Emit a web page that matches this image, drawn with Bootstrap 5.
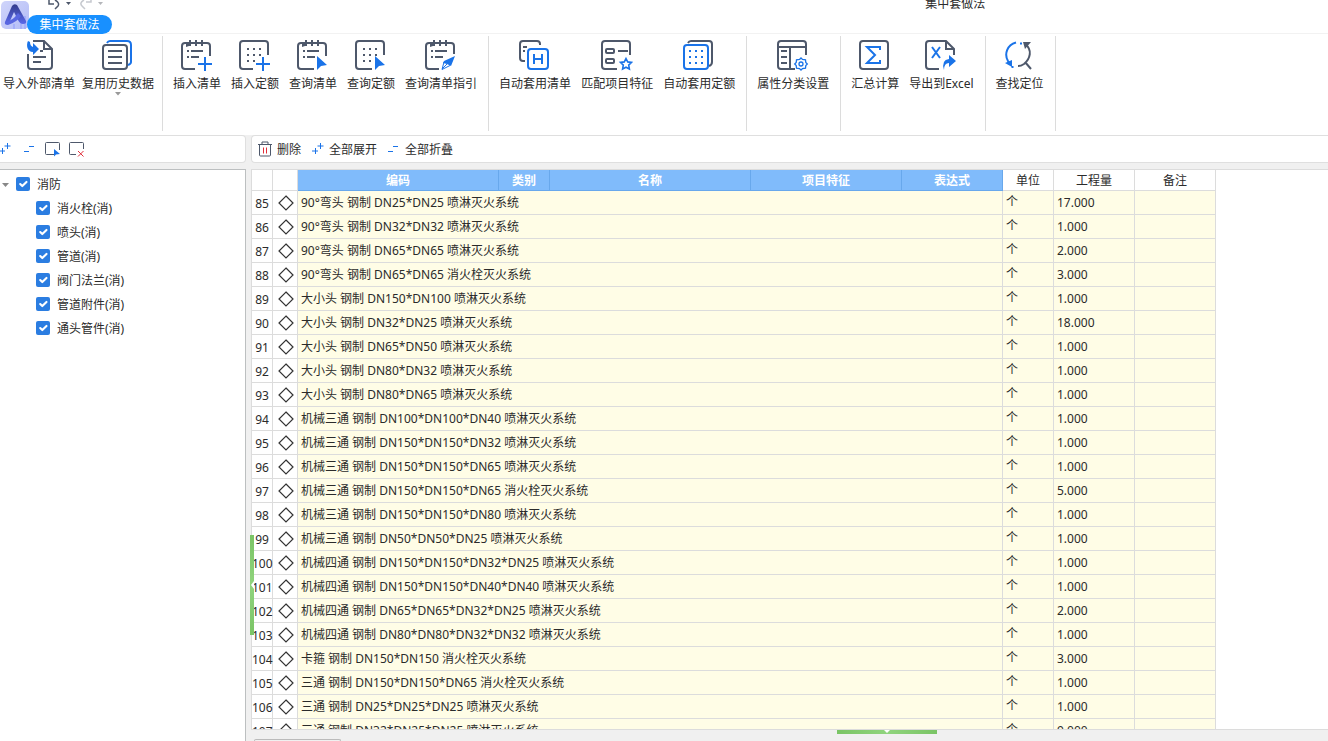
<!DOCTYPE html>
<html lang="zh-CN">
<head>
<meta charset="utf-8">
<meta name="viewport" content="width=device-width, initial-scale=1">
<title>集中套做法</title>
<link href="https://cdn.jsdelivr.net/npm/bootstrap@5.3.0/dist/css/bootstrap.min.css" rel="stylesheet">
<style>
body{font:12px/16px "Noto Sans","Noto Sans CJK SC",sans-serif;color:#2b2b2b;background:#f0f0f0}
.logo{width:30px;height:30px}
.brand-row{height:34px;border-bottom:1px solid #f2f2f2}
.quick{height:15px;flex:none}
.quick-history{padding-left:18px}
.quick-title{line-height:8px}
.grow-l{flex:834 1 0}
.grow-r{flex:348 1 0}
.tab-pill{height:19px;flex:none;width:85px;line-height:18px;margin-left:-3px;background:#1890ff;color:#fff;border-radius:10px;font-size:12px;padding:1px 0 0;border:0}
.ribbon{padding:2px 0 4px;height:101px}
.tool-group{display:flex;gap:10px;padding:0 11px 0 10px;border-right:1px solid #dcdcdc;height:95px}
.tool-group.first{gap:7px;padding:0 8px 0 3px}
.tool{border:0;background:none;padding:3px 0 0;display:flex;flex-direction:column;align-items:center;color:inherit;white-space:nowrap;flex:none}
.tool span{line-height:16px;margin-top:5px}
.tool svg,.bar svg,.ico{fill:none;stroke:#4e586b;stroke-width:2}
svg .b{stroke:#1a73e8}
svg .f{fill:#1a73e8;stroke:none}
svg .g{fill:#4e586b;stroke:none}
svg .d{stroke-dasharray:2 4}
svg .t{stroke-width:1}
svg .r{stroke:#e02f3a}
.bar{height:28px;background:#fff;border:1px solid #dfdfdf;padding-top:2px}
.bar button{border:0;background:none;padding:0;color:inherit;display:flex;align-items:center}
.bar svg{margin-bottom:2px}
.side{width:246px}
.side .bar{border-left:0;border-radius:0 4px 4px 0;gap:8px;padding-left:0}
.bar-main{border-right:0!important;border-radius:4px 0 0 4px;gap:10px;padding-left:5px}
.bar-main button{gap:4px}
.panes{gap:5px}
.tree{background:#fff;border:solid #bcbfc0;border-width:1px 1px 0 0;padding-top:3px;margin-top:6px}
.tree label,.tree .root{height:24px;display:flex;align-items:center}
.tree .kid{padding-left:36px}
.tree .form-check-input{width:14px;height:14px;margin:0 7px 2px 0;border-radius:2px;border:0;float:none;background-size:14px}
.tree .form-check-input:checked{background-color:#2b7de1}
.caret{width:16px;height:14px}
.sheet{background:#fff;border:solid #dcdcdc;border-width:1px 0 1px 1px;margin-top:6px}
.grid{table-layout:fixed;width:964px;border-collapse:separate;border-spacing:0}
.grid th,.grid td{height:24px;padding:0 3px;line-height:16px;border:solid #dcdcdc;border-width:0 1px 1px 0;white-space:nowrap}
.grid th{height:21px;font-weight:400;text-align:center;padding:2px 0 0}
.grid th.hot{background:#80bbfb;color:#fff;font-weight:700;border-color:#68a8ec}
.grid td{background:#fffde6}
.grid .no,.grid .mk{background:#fff;text-align:center}
.grid .no{padding:2px 0 0}
.grid .mk{padding:0 0 0 1px}
.grid .unit{padding-bottom:2px}
.grid svg{display:block;margin:auto;fill:none;stroke:#333;stroke-width:1.2}
.foot{height:11px}
.foot-tab{width:87px;height:2px;margin-left:3px;border:1px solid #bbb;border-bottom:0;border-radius:3px 3px 0 0}
.grip{background:#7cc568;position:absolute}
.grip-v{width:4px;height:100px;left:-1px;top:66%;background:linear-gradient(#7ac465,#90d47e,#7ac465)}
.grip-h{height:4px;width:100px;left:54.4%;top:0;background:linear-gradient(90deg,#7ac465,#90d47e,#7ac465)}
.grip svg{position:absolute;display:block}
</style>
</head>
<body class="vh-100 overflow-hidden d-flex flex-column">

<header class="bg-white flex-shrink-0">
  <div class="brand-row d-flex">
    <svg class="logo flex-shrink-0" viewBox="0 0 30 30">
      <defs>
        <linearGradient id="lg" x2="1" y2="1"><stop stop-color="#d0d5fa"/><stop offset="1" stop-color="#b3bcf7"/></linearGradient>
        <linearGradient id="la" x2="0" y2="1"><stop stop-color="#333c8c"/><stop offset="1" stop-color="#5a68ea"/></linearGradient>
      </defs>
      <rect x="1" y="1" width="28" height="28" rx="5" fill="url(#lg)"/>
      <path d="M20 29v-7h2v7zM24 29V16h2v13zM13 29v-5h2v5z" fill="#a5affa"/>
      <path d="M5 22 12 6q2-3 5-1l9 16q1 3-3 3-3 0-5-4l-4-8-4 9q-2 4-5 1z" fill="url(#la)"/>
      <path d="M5 22q8-1 13-9l3 3q-4 6-13 9-4 0-3-3z" fill="#5866e0"/>
    </svg>
    <div class="flex-grow-1 d-flex flex-column">
      <div class="quick d-flex">
        <div class="quick-history d-flex">
          <svg class="ico" width="56" height="12" viewBox="48 0 56 12">
            <path d="M49 0v4h5M55 0q5 3 3 6l-3 3" style="stroke-width:1.5"/><path class="g" d="M66 2h5l-2.500 3z"/>
            <path d="M91 0v2h-5M84 0q-5 3-2 6l3 3" style="stroke:#c6c9cf;stroke-width:1.5"/><path d="M98 2h5l-2.500 3z" style="fill:#b4b6ba;stroke:none"/>
          </svg>
        </div>
        <div class="grow-l"></div>
        <div class="quick-title text-nowrap">集中套做法</div>
        <div class="grow-r"></div>
      </div>
      <button class="tab-pill position-relative" type="button">集中套做法</button>
    </div>
  </div>

  <nav class="ribbon d-flex" aria-label="工具栏">
    <div class="tool-group first">
      <button class="tool" type="button"><svg width="32" height="32"><path d="M10 2h11l8 8v17a3 3 0 0 1-3 3H8a3 3 0 0 1-3-3V15M21 2v8h8M17 12h3M10 18h13M10 23h8"/><path class="f" d="M5 2C3 6 4 13 10 13v3l6-6-6-6v4Q7 7 7 3z"/></svg><span>导入外部清单</span></button>
      <button class="tool" type="button"><svg width="32" height="32"><rect x="1" y="6" width="24" height="24" rx="3"/><path d="M6 12h14M6 18h14M6 24h14"/><path class="b" d="M5 4q1-2 3-2h17q4 0 4 4v17q0 2-3 3"/></svg><span>复用历史数据</span><svg width="6" height="4"><path d="M0 0h6L3 3.500z" style="fill:#999;stroke:none"/></svg></button>
    </div>
    <div class="tool-group">
      <button class="tool" type="button"><svg width="32" height="32"><path d="M14 30H4a3 3 0 0 1-3-3V7a3 3 0 0 1 3-3h22a3 3 0 0 1 3 3v10M9 1v6M15 1v6M21 1v6M6 12h2M10 12h12M6 18h2M10 18h8"/><path class="g" d="M5 4h5v3H8L5 8z"/><path class="b" d="M24 18v14M17 25h14"/></svg><span>插入清单</span></button>
      <button class="tool" type="button"><svg width="32" height="32"><path d="M14 30H4a3 3 0 0 1-3-3V5a3 3 0 0 1 3-3h22a3 3 0 0 1 3 3v11"/><path class="d" d="M8 10h14M8 16h14M8 22h8"/><path class="b" d="M24 18v14M17 25h14"/></svg><span>插入定额</span></button>
      <button class="tool" type="button"><svg width="32" height="32"><path d="M17 30H4a3 3 0 0 1-3-3V7a3 3 0 0 1 3-3h22a3 3 0 0 1 3 3v10M9 1v6M15 1v6M21 1v6M6 12h2M10 12h12M6 18h2M10 18h8"/><path class="g" d="M5 4h5v3H8L5 8z"/><path class="f" d="M20 17l10 9-6 1-4 4z"/></svg><span>查询清单</span></button>
      <button class="tool" type="button"><svg width="32" height="32"><path d="M17 30H4a3 3 0 0 1-3-3V5a3 3 0 0 1 3-3h22a3 3 0 0 1 3 3v11"/><path class="d" d="M8 10h14M8 16h14M8 22h8"/><path class="f" d="M20 17l10 9-6 1-4 4z"/></svg><span>查询定额</span></button>
      <button class="tool" type="button"><svg width="32" height="32"><path d="M14 30H4a3 3 0 0 1-3-3V7a3 3 0 0 1 3-3h22a3 3 0 0 1 3 3v8M9 1v6M15 1v6M21 1v6M6 12h2M10 12h12M6 18h2M10 18h8"/><path class="g" d="M5 4h5v3H8L5 8z"/><path class="f" d="M30 17 19 22l-1 2 4 1 4 2z"/><path class="b t" d="M19 23l-2 7.500 8-4M17 30l5-5"/></svg><span>查询清单指引</span></button>
    </div>
    <div class="tool-group">
      <button class="tool" type="button"><svg width="32" height="32"><path d="M6 22H4a3 3 0 0 1-3-3V5a3 3 0 0 1 3-3h14a3 3 0 0 1 3 3v1M4 8h4M4 12h2"/><rect class="b" x="9" y="10" width="20" height="20" rx="3"/><path class="b" d="M15 15v10M23 15v10M15 20h8"/></svg><span>自动套用清单</span></button>
      <button class="tool" type="button"><svg width="32" height="32"><path d="M16 30H4a3 3 0 0 1-3-3V5a3 3 0 0 1 3-3h22a3 3 0 0 1 3 3v11M17 12h10"/><rect x="5" y="10" width="8" height="4" rx="1"/><rect x="5" y="20" width="8" height="4" rx="1"/><path class="b" style="stroke-width:1.600" d="M25 19.500l1.700 3.400 3.800.5-2.800 2.700.7 3.900-3.400-1.800-3.400 1.800.7-3.900-2.800-2.700 3.800-.5z"/></svg><span>匹配项目特征</span></button>
      <button class="tool" type="button"><svg width="32" height="32"><path d="M5 4q1-2 3-2h18q3 0 3 3v18q0 3-3 4"/><rect class="b" x="1" y="6" width="24" height="24" rx="3"/><path class="b d" d="M6 12h14M6 18h14M6 24h14"/></svg><span>自动套用定额</span></button>
    </div>
    <div class="tool-group">
      <button class="tool" type="button"><svg width="32" height="32"><path d="M18 30H4a3 3 0 0 1-3-3V5a3 3 0 0 1 3-3h22a3 3 0 0 1 3 3v11M1 8h28M13 8v22M4 12h6M4 18h6M4 24h6"/><path class="b" style="stroke-width:1.300" d="M22.500 20.500l1.500-1.500 1.500 1.500 3 .3.300 2.700 1.500 1.500-1.500 1.500-.3 2.700-3 .3L24 31l-1.500-1.500-3-.3-.3-2.700L17.700 25l1.500-1.500.3-2.700z"/><circle class="b" style="stroke-width:1.300" cx="24" cy="25" r="2"/></svg><span>属性分类设置</span></button>
    </div>
    <div class="tool-group">
      <button class="tool" type="button"><svg width="32" height="32"><rect x="1" y="2" width="28" height="28" rx="3"/><path class="b" d="M21 11V8H8l8 8-8 8h13v-3"/></svg><span>汇总计算</span></button>
      <button class="tool" type="button"><svg width="32" height="32"><path d="M14 30H4a3 3 0 0 1-3-3V5a3 3 0 0 1 3-3h17l8 8v6M21 2v8h8"/><path class="b" d="M7 8l8 11M15 8L7 19"/><path class="f" d="M19 31q-3-10 5-11v-4l7 6-7 6v-4q-5 0-5 7z"/></svg><span>导出到Excel</span></button>
    </div>
    <div class="tool-group">
      <button class="tool" type="button"><svg width="32" height="32"><path class="b" d="M12 3.500C3 6 0 15 4 22l2 3M17 3.500v2M7.500 28h2"/><path class="f" d="M1 24l7-3v7z"/><path d="M21 5c8 6 5 15-1 20q-3 2-6 2M21 23l6 7"/><path class="g" d="M19 3h8l-6 7z"/></svg><span>查找定位</span></button>
    </div>
  </nav>
</header>

<main class="panes d-flex flex-grow-1 overflow-hidden">
  <aside class="side d-flex flex-column flex-shrink-0">
    <div class="bar d-flex align-items-center">
      <button type="button" aria-label="展开"><svg width="12" height="16"><path class="b t" d="M7.500 2v6M4.500 5h6M2.500 7v6M0 10h5"/></svg></button>
      <button type="button" aria-label="折叠"><svg width="16" height="16"><path class="b t" d="M9 5.500h5M4 10.500h5"/></svg></button>
      <button type="button" aria-label="全选"><svg width="16" height="16"><path class="t" d="M10 13.500H2.500q-1 0-1-1v-10q0-1 1-1h12q1 0 1 1V9"/><path class="f" d="M10 8l6 5-4 .5-2 2z"/></svg></button>
      <button type="button" aria-label="取消选择"><svg width="16" height="16"><path class="t" d="M8 13.500H2.500q-1 0-1-1v-10q0-1 1-1h12q1 0 1 1V8"/><path class="r t" d="M10 10l5.500 5.500M15.500 10L10 15.500"/></svg></button>
    </div>
    <div class="tree flex-grow-1">
      <div class="root"><svg class="caret" viewBox="0 0 16 14"><path d="M2 5h7L5.500 9z" fill="#888"/></svg><label><input class="form-check-input" type="checkbox" checked>消防</label></div>
      <label class="kid"><input class="form-check-input" type="checkbox" checked>消火栓(消)</label>
      <label class="kid"><input class="form-check-input" type="checkbox" checked>喷头(消)</label>
      <label class="kid"><input class="form-check-input" type="checkbox" checked>管道(消)</label>
      <label class="kid"><input class="form-check-input" type="checkbox" checked>阀门法兰(消)</label>
      <label class="kid"><input class="form-check-input" type="checkbox" checked>管道附件(消)</label>
      <label class="kid"><input class="form-check-input" type="checkbox" checked>通头管件(消)</label>
    </div>
  </aside>

  <section class="d-flex flex-column flex-grow-1 overflow-visible position-relative" style="min-width:0">
    <div class="bar bar-main d-flex align-items-center flex-shrink-0">
      <button type="button"><svg width="16" height="16"><path class="t" d="M1 3.500h14M5 3V1h6v2M2.500 4v10q0 1 1 1h9q1 0 1-1V4"/><path class="r t" d="M6.500 6.500v6M9.500 6.500v6"/></svg>删除</button>
      <button type="button"><svg width="14" height="16"><path class="b t" d="M9.500 2v6M6.500 5h6M4.500 7v6M1 10h6"/></svg>全部展开</button>
      <button type="button"><svg width="14" height="16"><path class="b t" d="M6 5.500h5M1 10.500h5"/></svg>全部折叠</button>
    </div>
    <div class="sheet flex-grow-1 overflow-hidden" style="min-height:0">
      <table class="grid">
        <colgroup>
          <col style="width:21px"><col style="width:25px"><col style="width:201px"><col style="width:51px"><col style="width:201px"><col style="width:151px"><col style="width:101px"><col style="width:51px"><col style="width:81px"><col style="width:81px">
        </colgroup>
        <thead>
          <tr><th></th><th></th><th class="hot">编码</th><th class="hot">类别</th><th class="hot">名称</th><th class="hot">项目特征</th><th class="hot">表达式</th><th>单位</th><th>工程量</th><th>备注</th></tr>
        </thead>
        <tbody id="rows"></tbody>
      </table>
    </div>
    <div class="foot flex-shrink-0 position-relative d-flex align-items-end">
      <div class="foot-tab"></div>
      <div class="grip grip-h"><svg width="8" height="4" style="left:46px;top:0"><path d="M1 0h6L4 3z" fill="#fff"/></svg></div>
    </div>
    <div class="grip grip-v"><svg width="4" height="8" style="left:0;top:46px"><path d="M4 0v8L1 4z" fill="#fff"/></svg></div>
  </section>
</main>

<script>
const items = [
  ["90°弯头 钢制 DN25*DN25 喷淋灭火系统", "17.000"],
  ["90°弯头 钢制 DN32*DN32 喷淋灭火系统", "1.000"],
  ["90°弯头 钢制 DN65*DN65 喷淋灭火系统", "2.000"],
  ["90°弯头 钢制 DN65*DN65 消火栓灭火系统", "3.000"],
  ["大小头 钢制 DN150*DN100 喷淋灭火系统", "1.000"],
  ["大小头 钢制 DN32*DN25 喷淋灭火系统", "18.000"],
  ["大小头 钢制 DN65*DN50 喷淋灭火系统", "1.000"],
  ["大小头 钢制 DN80*DN32 喷淋灭火系统", "1.000"],
  ["大小头 钢制 DN80*DN65 喷淋灭火系统", "1.000"],
  ["机械三通 钢制 DN100*DN100*DN40 喷淋灭火系统", "1.000"],
  ["机械三通 钢制 DN150*DN150*DN32 喷淋灭火系统", "1.000"],
  ["机械三通 钢制 DN150*DN150*DN65 喷淋灭火系统", "1.000"],
  ["机械三通 钢制 DN150*DN150*DN65 消火栓灭火系统", "5.000"],
  ["机械三通 钢制 DN150*DN150*DN80 喷淋灭火系统", "1.000"],
  ["机械三通 钢制 DN50*DN50*DN25 喷淋灭火系统", "1.000"],
  ["机械四通 钢制 DN150*DN150*DN32*DN25 喷淋灭火系统", "1.000"],
  ["机械四通 钢制 DN150*DN150*DN40*DN40 喷淋灭火系统", "1.000"],
  ["机械四通 钢制 DN65*DN65*DN32*DN25 喷淋灭火系统", "2.000"],
  ["机械四通 钢制 DN80*DN80*DN32*DN32 喷淋灭火系统", "1.000"],
  ["卡箍 钢制 DN150*DN150 消火栓灭火系统", "3.000"],
  ["三通 钢制 DN150*DN150*DN65 消火栓灭火系统", "1.000"],
  ["三通 钢制 DN25*DN25*DN25 喷淋灭火系统", "1.000"],
  ["三通 钢制 DN32*DN25*DN25 喷淋灭火系统", "9.000"]
];
const diamond = '<svg width="16" height="16"><path d="M8 1l7 7-7 7-7-7z"/></svg>';
document.getElementById("rows").innerHTML = items.map(([name, qty], i) =>
  `<tr><td class="no">${85 + i}</td><td class="mk">${diamond}</td><td colspan="5">${name}</td><td class="unit">个</td><td>${qty}</td><td></td></tr>`
).join("");
</script>
<script src="https://cdn.jsdelivr.net/npm/bootstrap@5.3.0/dist/js/bootstrap.bundle.min.js"></script>
</body>
</html>
